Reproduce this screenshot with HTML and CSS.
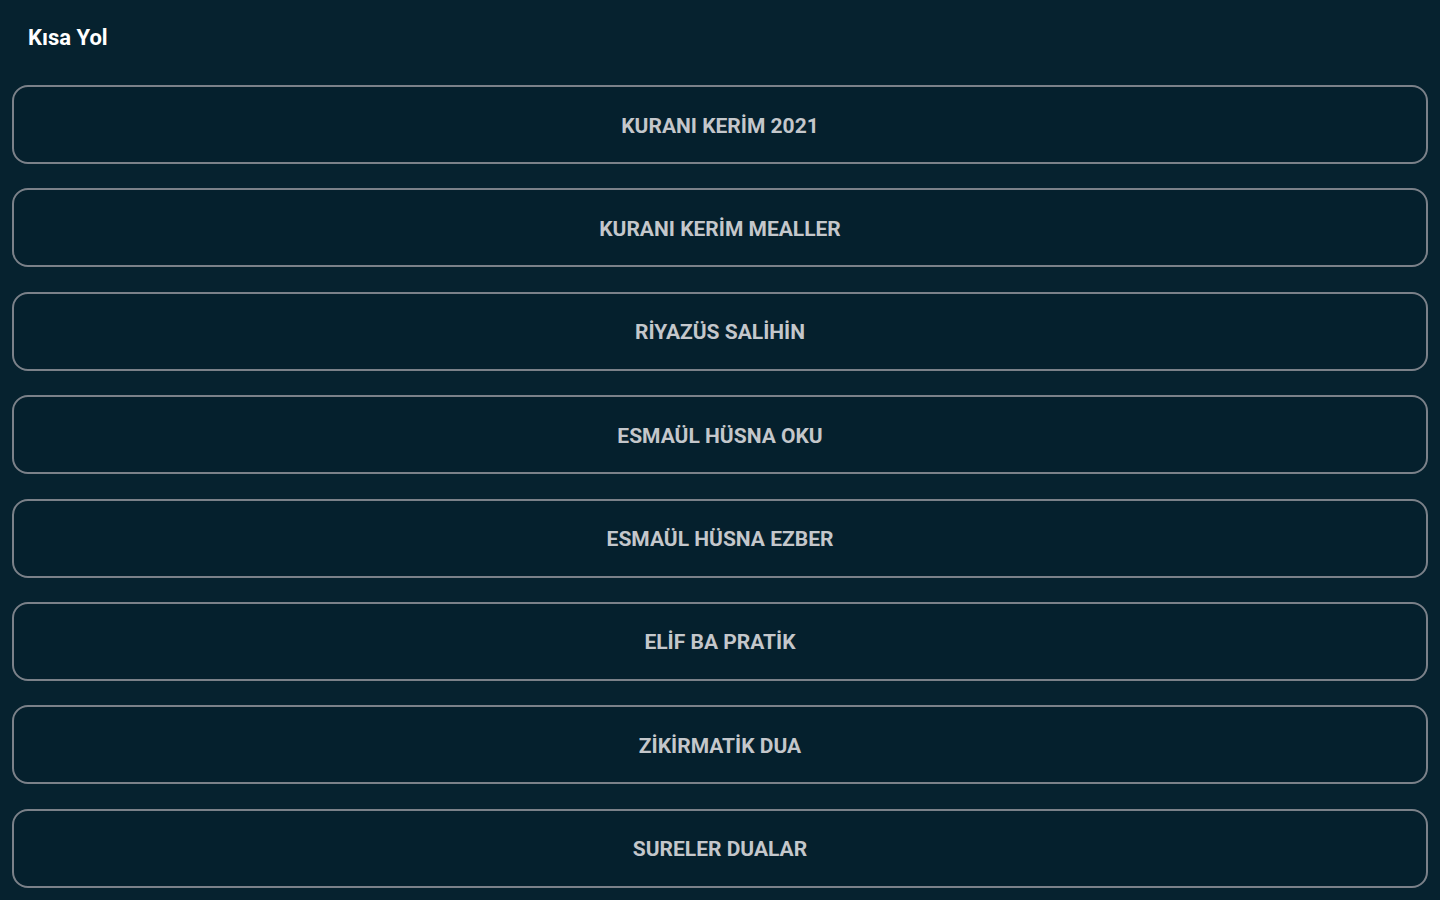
FILE: index.html
```html
<!DOCTYPE html>
<html lang="tr">
<head>
<meta charset="utf-8">
<title>Kısa Yol</title>
<link rel="stylesheet" href="styles.css">
</head>
<body>
<header class="topbar"><h1 class="title">Kısa Yol</h1></header>
<main class="list">
  <button class="item">KURANI KERİM 2021</button>
  <button class="item">KURANI KERİM MEALLER</button>
  <button class="item">RİYAZÜS SALİHİN</button>
  <button class="item">ESMAÜL HÜSNA OKU</button>
  <button class="item">ESMAÜL HÜSNA EZBER</button>
  <button class="item">ELİF BA PRATİK</button>
  <button class="item">ZİKİRMATİK DUA</button>
  <button class="item">SURELER DUALAR</button>
</main>
</body>
</html>
```
FILE: styles.css
```css
html, body {
  margin: 0;
  padding: 0;
  background: #06222f;
  height: 100%;
  overflow: hidden;
}
body {
  font-family: Roboto, "Liberation Sans", sans-serif;
}
.topbar {
  height: 85px;
  box-sizing: border-box;
  padding: 24px 0 0 28px;
}
.title {
  margin: 0;
  font-size: 22px;
  line-height: 28px;
  font-weight: 700;
  color: #ffffff;
  letter-spacing: 0;
}
.list {
  display: flex;
  flex-direction: column;
  gap: 24.4px;
  padding: 0 12px;
}
.item {
  height: 79px;
  box-sizing: border-box;
  background: #05202d;
  border: 2px solid #7b8189;
  border-radius: 16px;
  color: #c4c7cb;
  font-family: Roboto, "Liberation Sans", sans-serif;
  font-size: 21px;
  font-weight: 700;
  letter-spacing: 0;
  text-align: center;
  padding: 2px 0 0;
  cursor: pointer;
}
```
